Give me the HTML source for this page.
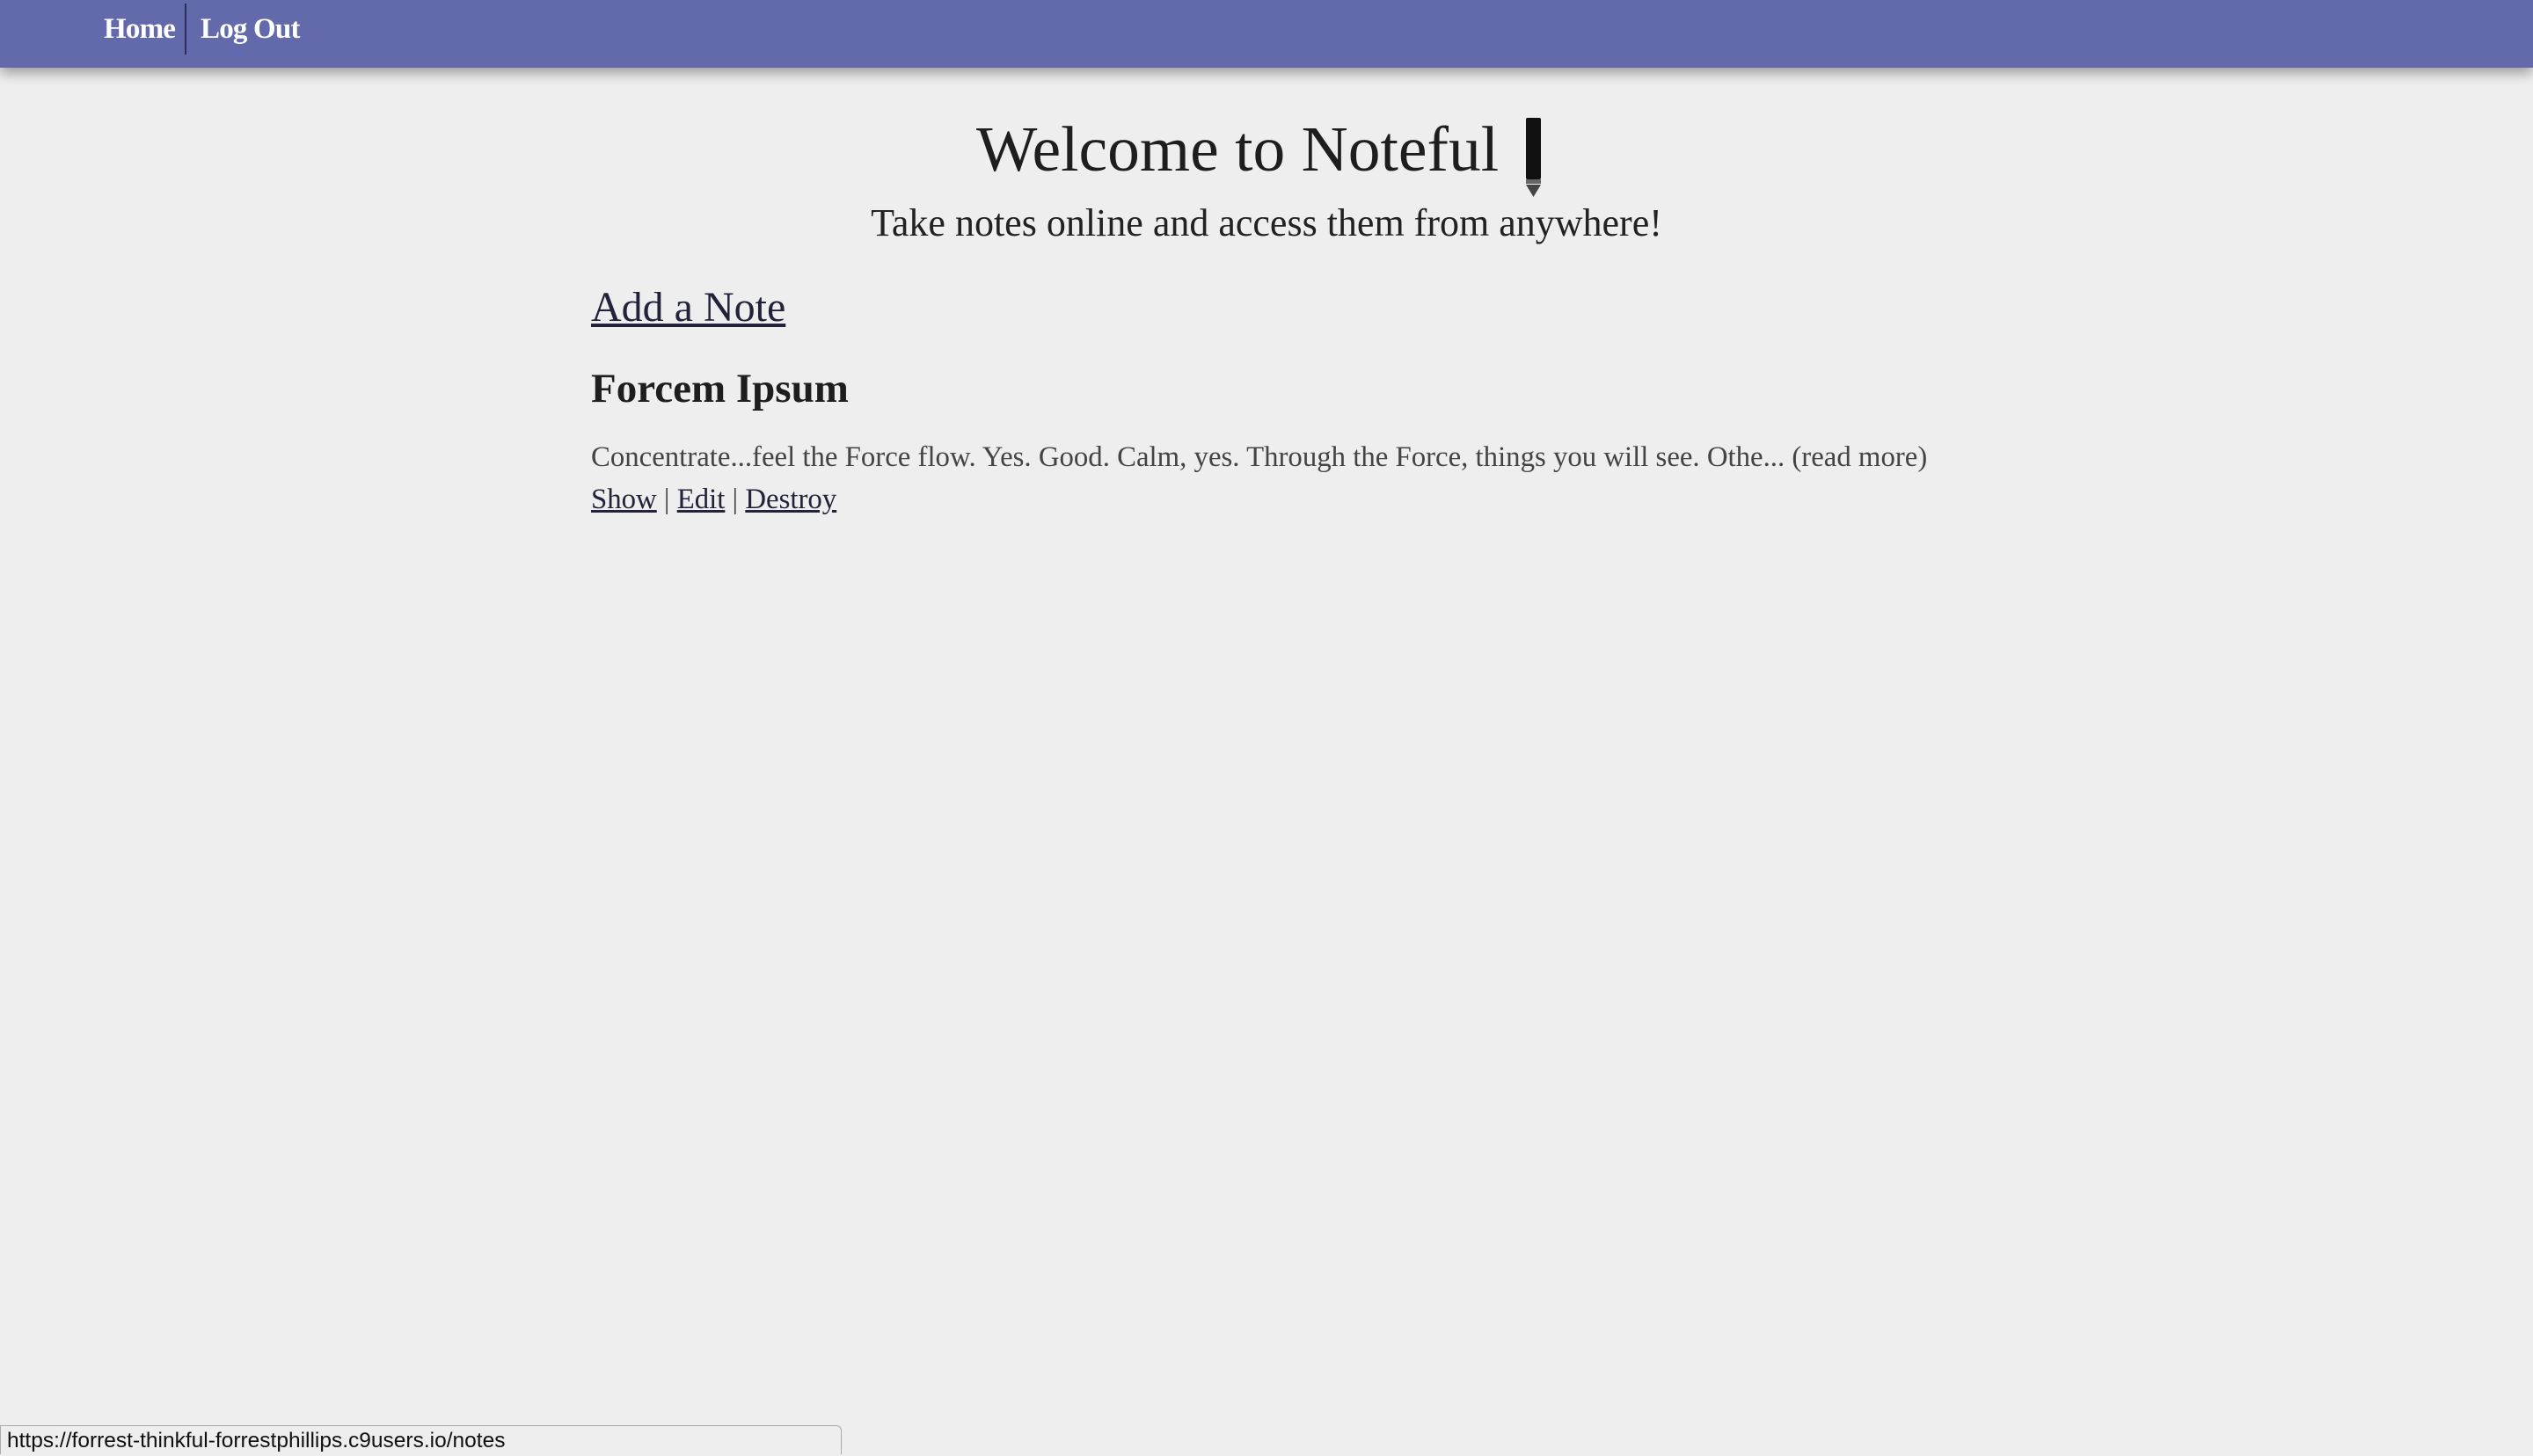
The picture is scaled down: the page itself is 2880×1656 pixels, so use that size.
<!DOCTYPE html>
<html><head><meta charset="utf-8"><style>
html,body{margin:0;padding:0;}
body{width:2880px;height:1654px;background:#eeeeee;font-family:"Liberation Serif",serif;color:#222;position:relative;overflow:hidden;}
.nav{position:absolute;left:0;top:0;width:2880px;height:77px;background:#636aab;box-shadow:0 6px 14px rgba(0,0,0,.35);}
.nav a{position:absolute;top:15px;color:#fff;font-size:33px;font-weight:bold;text-decoration:none;letter-spacing:-0.8px;}
.sep{position:absolute;left:210px;top:4px;width:2px;height:58px;background:#2a2d55;}
.t{position:absolute;white-space:nowrap;}
a.u{color:#22223b;text-decoration:underline;}
.status{position:absolute;left:0;top:1621px;width:957px;height:33px;background:#eee;border:1px solid #aaa;border-bottom:none;border-radius:0 6px 0 0;font-family:"Liberation Sans",sans-serif;font-size:24.5px;color:#111;line-height:34px;padding-left:7px;box-sizing:border-box;}
</style></head><body>
<div class="nav">
<a style="left:118px">Home</a>
<div class="sep"></div>
<a style="left:228px">Log Out</a>
</div>
<div class="t" style="left:1110px;top:128px;font-size:73.5px;color:#1e1e1e;">Welcome to Noteful</div>
<svg style="position:absolute;left:1732px;top:134px" width="24" height="90" viewBox="0 0 24 90"><rect x="3" y="0" width="17" height="70" rx="2" fill="#111"/><rect x="3" y="70" width="17" height="5" fill="#666"/><polygon points="3,76 20,76 11.5,90" fill="#444"/></svg>
<div class="t" style="left:0;width:2880px;text-align:center;top:228px;font-size:44px;color:#222;">Take notes online and access them from anywhere!</div>
<div class="t" style="left:672px;top:322px;font-size:48px;"><a class="u">Add a Note</a></div>
<div class="t" style="left:672px;top:415px;font-size:47px;font-weight:bold;color:#1e1e1e;">Forcem Ipsum</div>
<div class="t" style="left:672px;top:502px;font-size:32.8px;color:#444;">Concentrate...feel the Force flow. Yes. Good. Calm, yes. Through the Force, things you will see. Othe... (read more)</div>
<div class="t" style="left:672px;top:550px;font-size:32.8px;color:#444;"><a class="u">Show</a> | <a class="u">Edit</a> | <a class="u">Destroy</a></div>
<div class="status">https://forrest-thinkful-forrestphillips.c9users.io/notes</div>
</body></html>
